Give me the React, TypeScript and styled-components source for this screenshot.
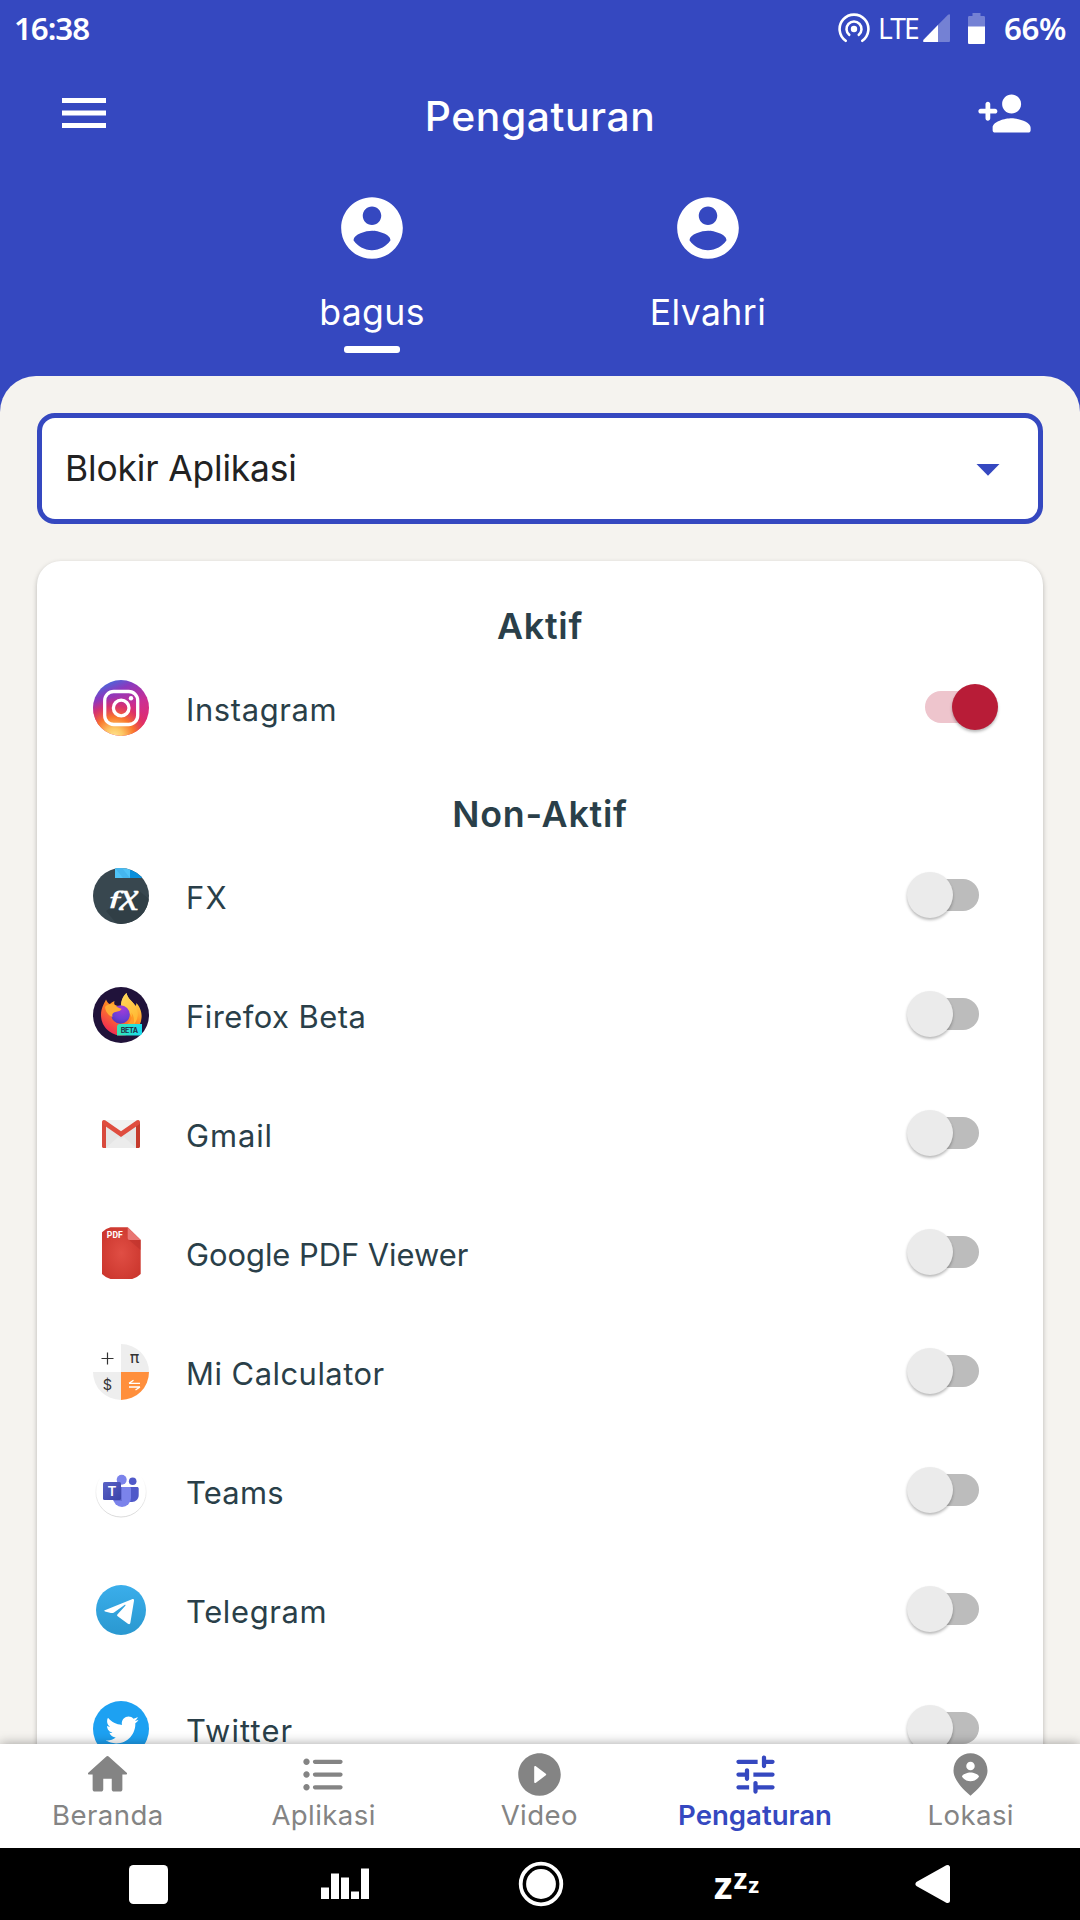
import React from "react";
import styled, { createGlobalStyle } from "styled-components";
import { FaTwitter } from "react-icons/fa";

const BLUE = "#3548c0";
const INK = "#2a3f49";
const GREY = "#848484";

const GlobalStyle = createGlobalStyle`
  * { box-sizing: border-box; }
  body {
    margin: 0;
    font-family: Inter, "Liberation Sans", sans-serif;
    -webkit-font-smoothing: antialiased;
  }
  svg { display: block; flex: none; }
`;

const Screen = styled.div`
  width: 1080px;
  height: 1920px;
  display: flex;
  flex-direction: column;
  overflow: hidden;
  background: ${BLUE};
  color: #fff;
`;

const StatusBar = styled.header`
  height: 56px;
  padding: 0 14px;
  display: flex;
  align-items: center;
  justify-content: space-between;
`;

const StatusText = styled.span<{ $tracking: number }>`
  font: 560 31.3px/40px "Noto Sans", sans-serif;
  letter-spacing: ${(p) => p.$tracking}px;
`;

const StatusGroup = styled.div`
  display: flex;
  align-items: center;
`;

const Network = styled.span`
  width: 45px;
  margin-left: 8px;
  font: 400 28.2px/40px "Noto Sans", sans-serif;
  letter-spacing: -2px;
`;

const BatterySlot = styled.div`
  margin: 0 19px 0 18px;
`;

const Toolbar = styled.div`
  height: 114px;
  padding: 0 47px 0 62px;
  display: grid;
  grid-template-columns: 57px 1fr 57px;
  align-items: center;
`;

const Title = styled.h1`
  margin: 0;
  padding: 5px 15px 0 0;
  text-align: center;
  font-size: 40.8px;
  line-height: 50px;
  font-weight: 550;
  letter-spacing: 0.6px;
`;

const Profiles = styled.div`
  height: 206px;
  width: 672px;
  margin: 0 auto;
  padding-top: 21px;
  display: grid;
  grid-template-columns: 1fr 1fr;
`;

const Profile = styled.div`
  display: flex;
  flex-direction: column;
  align-items: center;
`;

const ProfileName = styled.span`
  margin-top: 26px;
  font-size: 35.6px;
  line-height: 44px;
  letter-spacing: 0.4px;
`;

const ProfileMark = styled.span`
  width: 56px;
  height: 7px;
  margin-top: 11px;
  border-radius: 3px;
  background: #fff;
`;

const Sheet = styled.main`
  flex: 1;
  min-height: 0;
  padding: 37px 37px 0;
  overflow: hidden;
  border-radius: 36px 36px 0 0;
  background: #f5f3ef;
`;

const Select = styled.div`
  height: 111px;
  padding: 0 38px 0 23px;
  display: flex;
  align-items: center;
  justify-content: space-between;
  border: 5px solid ${BLUE};
  border-radius: 18px;
  background: #fff;
  color: #222;
  font-size: 35.4px;
  font-weight: 370;
  letter-spacing: -0.15px;
`;

const Card = styled.section`
  margin-top: 37px;
  height: 1400px;
  padding-top: 18.5px;
  border-radius: 24px;
  background: #fff;
  color: ${INK};
  box-shadow: 0 2px 5px rgba(0, 0, 0, 0.25);
`;

const GroupTitle = styled.h2`
  margin: 0;
  height: 69px;
  padding-top: 24px;
  text-align: center;
  font-size: 35.8px;
  line-height: 45px;
  font-weight: 560;
  letter-spacing: 0.75px;
`;

const AppRow = styled.div`
  height: 119px;
  padding: 0 45px 0 56px;
  display: flex;
  align-items: center;
`;

const AppName = styled.span<{ $tracking: number }>`
  flex: 1;
  padding: 3px 0 0 37px;
  font-size: 30.9px;
  letter-spacing: ${(p) => p.$tracking}px;
`;

const Switch = styled.div`
  position: relative;
  width: 92px;
  height: 47px;
  margin-bottom: 1.5px;
  display: flex;
  align-items: center;
  justify-content: center;
`;

const Track = styled.span<{ $on: boolean }>`
  width: 54px;
  height: 32px;
  border-radius: 16px;
  background: ${(p) => (p.$on ? "#eec5cd" : "#bcbcbc")};
`;

const Thumb = styled.span<{ $on: boolean }>`
  position: absolute;
  top: 0;
  left: ${(p) => (p.$on ? 45.5 : 0.5)}px;
  width: 46.5px;
  height: 46.5px;
  border-radius: 50%;
  background: ${(p) => (p.$on ? "#b81c37" : "#ebebeb")};
  box-shadow: 0 2px 3px rgba(0, 0, 0, 0.28);
`;

const TabBar = styled.nav`
  position: relative;
  z-index: 1;
  height: 104px;
  padding-right: 1.4px;
  display: grid;
  grid-template-columns: repeat(5, 1fr);
  background: #fff;
  box-shadow: 0 0 11px rgba(0, 0, 0, 0.36);
`;

const Tab = styled.a<{ $active: boolean }>`
  padding-top: 5px;
  display: flex;
  flex-direction: column;
  align-items: center;
  color: ${(p) => (p.$active ? BLUE : GREY)};
  fill: currentColor;
  font-size: 27.6px;
  line-height: 30px;
  font-weight: ${(p) => (p.$active ? 570 : 400)};
  letter-spacing: ${(p) => (p.$active ? 0 : 0.4)}px;
`;

const SystemBar = styled.footer`
  position: relative;
  z-index: 2;
  height: 72px;
  padding: 0 49.5px 0 50.5px;
  display: grid;
  grid-template-columns: repeat(5, 196px);
  align-items: center;
  justify-items: center;
  background: #000;
`;

const Sleep = styled.span`
  display: flex;
  align-items: flex-end;
  gap: 1px;
  height: 48px;
  font: 700 37px/48px "Noto Sans", sans-serif;
`;

const Zed = styled.span<{ $size: number; $lift: number }>`
  font-size: ${(p) => p.$size}px;
  line-height: 48px;
  padding-bottom: ${(p) => p.$lift}px;
`;

const Icon = ({ size, d }: { size: number; d: string }) => (
  <svg width={size} height={size} viewBox="0 0 24 24" fill="currentColor">
    <path fillRule="evenodd" d={d} />
  </svg>
);

const accountPath =
  "M12 2C6.48 2 2 6.48 2 12s4.48 10 10 10 10-4.48 10-10S17.52 2 12 2zm0 3c1.66 0 3 1.34 3 3s-1.34 3-3 3-3-1.34-3-3 1.34-3 3-3zm0 14.2c-2.5 0-4.71-1.28-6-3.22.03-1.99 4-3.08 6-3.08 1.99 0 5.97 1.09 6 3.08-1.29 1.94-3.5 3.22-6 3.22z";
const addPersonPath =
  "M15 12c2.21 0 4-1.79 4-4s-1.79-4-4-4-4 1.79-4 4 1.79 4 4 4zm-9-2V8c0-.55-.45-1-1-1s-1 .45-1 1v2H2c-.55 0-1 .45-1 1s.45 1 1 1h2v2c0 .55.45 1 1 1s1-.45 1-1v-2h2c.55 0 1-.45 1-1s-.45-1-1-1H6zm9 4c-2.67 0-8 1.34-8 4v1c0 .55.45 1 1 1h14c.55 0 1-.45 1-1v-1c0-2.66-5.33-4-8-4z";

const tabs = [
  {
    label: "Beranda",
    d: "M10 19v-5h4v5c0 .55.45 1 1 1h3c.55 0 1-.45 1-1v-7h1.7c.46 0 .68-.57.33-.87L12.67 3.6c-.38-.34-.96-.34-1.34 0l-8.36 7.53c-.34.3-.13.87.33.87H5v7c0 .55.45 1 1 1h3c.55 0 1-.45 1-1z",
  },
  {
    label: "Aplikasi",
    d: "M4 10.5c-.83 0-1.5.67-1.5 1.5s.67 1.5 1.5 1.5 1.5-.67 1.5-1.5-.67-1.5-1.5-1.5zm0-6c-.83 0-1.5.67-1.5 1.5S3.17 7.5 4 7.5 5.5 6.83 5.5 6 4.83 4.5 4 4.5zm0 12c-.83 0-1.5.68-1.5 1.5s.68 1.5 1.5 1.5 1.5-.68 1.5-1.5-.67-1.5-1.5-1.5zM8 19h12c.55 0 1-.45 1-1s-.45-1-1-1H8c-.55 0-1 .45-1 1s.45 1 1 1zm0-6h12c.55 0 1-.45 1-1s-.45-1-1-1H8c-.55 0-1 .45-1 1s.45 1 1 1zM7 6c0 .55.45 1 1 1h12c.55 0 1-.45 1-1s-.45-1-1-1H8c-.55 0-1 .45-1 1z",
  },
  {
    label: "Video",
    d: "M12 2C6.48 2 2 6.48 2 12s4.48 10 10 10 10-4.48 10-10S17.52 2 12 2zM9.5 15.5v-7c0-.41.47-.65.8-.4l4.67 3.5c.27.2.27.6 0 .8l-4.67 3.5c-.33.25-.8.01-.8-.4z",
  },
  {
    label: "Pengaturan",
    active: true,
    d: "M3 18c0 .55.45 1 1 1h5v-2H4c-.55 0-1 .45-1 1zM3 6c0 .55.45 1 1 1h9V5H4c-.55 0-1 .45-1 1zm10 14v-1h7c.55 0 1-.45 1-1s-.45-1-1-1h-7v-1c0-.55-.45-1-1-1s-1 .45-1 1v4c0 .55.45 1 1 1s1-.45 1-1zM7 10v1H4c-.55 0-1 .45-1 1s.45 1 1 1h3v1c0 .55.45 1 1 1s1-.45 1-1v-4c0-.55-.45-1-1-1s-1 .45-1 1zm14 2c0-.55-.45-1-1-1h-9v2h9c.55 0 1-.45 1-1zm-5-3c.55 0 1-.45 1-1V7h3c.55 0 1-.45 1-1s-.45-1-1-1h-3V4c0-.55-.45-1-1-1s-1 .45-1 1v4c0 .55.45 1 1 1z",
  },
  {
    label: "Lokasi",
    d: "M12 2c-4.2 0-8 3.22-8 8.2 0 3.32 2.67 7.25 8 11.8 5.33-4.55 8-8.48 8-11.8C20 5.22 16.2 2 12 2zM12 6a2 2 0 1 1 0 4 2 2 0 0 1 0-4zM12 15.2c-1.67 0-3.14-.85-4-2.15.02-1.32 2.67-2.05 4-2.05s3.98.73 4 2.05c-.86 1.3-2.33 2.15-4 2.15z",
  },
];

const AppSvg = ({ children }: { children: React.ReactNode }) => (
  <svg width="56" height="56" viewBox="0 0 56 56">
    {children}
  </svg>
);

const InstagramIcon = () => (
  <AppSvg>
    <defs>
      <linearGradient id="igBase" x1="0.25" y1="0" x2="0.7" y2="1">
        <stop offset="0" stopColor="#3f6fe0" />
        <stop offset="0.22" stopColor="#8a39be" />
        <stop offset="0.55" stopColor="#cc2e93" />
        <stop offset="1" stopColor="#ea2c62" />
      </linearGradient>
      <radialGradient id="igGlow" cx="0.38" cy="1.02" r="0.72">
        <stop offset="0" stopColor="#ffe595" />
        <stop offset="0.22" stopColor="#fdc865" />
        <stop offset="0.5" stopColor="#f9772c" />
        <stop offset="0.78" stopColor="#e0325f" stopOpacity="0.75" />
        <stop offset="1" stopColor="#d02b80" stopOpacity="0" />
      </radialGradient>
    </defs>
    <circle cx="28" cy="28" r="28" fill="url(#igBase)" />
    <circle cx="28" cy="28" r="28" fill="url(#igGlow)" />
    <g fill="none" stroke="#fff" strokeWidth="3.3">
      <rect x="11.7" y="11.5" width="33" height="33" rx="9" />
      <circle cx="28.2" cy="28" r="7.8" />
    </g>
    <circle cx="38" cy="18.3" r="2.2" fill="#fff" />
  </AppSvg>
);

const FxIcon = () => (
  <AppSvg>
    <clipPath id="fxClip">
      <circle cx="28" cy="28" r="28" />
    </clipPath>
    <g clipPath="url(#fxClip)">
      <rect width="56" height="56" fill="#38474f" />
      <path d="M13 43l32-21 11 9v25H24z" fill="#313f46" />
      <rect x="22" width="15" height="10" fill="#4fc3f7" />
      <path d="M22 0h7l8 10H30z" fill="#45b6ee" />
      <rect x="37" width="15" height="10" fill="#0a8fdc" />
    </g>
    <g fill="#fff" stroke="#fff" fontFamily="'Liberation Serif', serif" fontStyle="italic">
      <text transform="translate(14.5 37) scale(1.5 1)" fontSize="22" strokeWidth="0.9">ƒ</text>
      <text x="26.500" y="41.500" fontSize="43" strokeWidth="0.5">x</text>
    </g>
  </AppSvg>
);

const FirefoxIcon = () => (
  <AppSvg>
    <defs>
      <linearGradient id="ffBody" x1="0.8" y1="0.1" x2="0.25" y2="0.95">
        <stop offset="0" stopColor="#ffd84a" />
        <stop offset="0.45" stopColor="#ff8a22" />
        <stop offset="1" stopColor="#f02a52" />
      </linearGradient>
      <linearGradient id="ffTail" x1="0.3" y1="0" x2="0.7" y2="1">
        <stop offset="0" stopColor="#ffd65a" />
        <stop offset="1" stopColor="#ffb52e" />
      </linearGradient>
      <radialGradient id="ffGlobe" cx="0.6" cy="0.2" r="0.9">
        <stop offset="0" stopColor="#a33bd8" />
        <stop offset="0.6" stopColor="#6b3fd6" />
        <stop offset="1" stopColor="#4a35b0" />
      </radialGradient>
      <linearGradient id="ffBadge">
        <stop offset="0" stopColor="#35e6b5" />
        <stop offset="1" stopColor="#19dcee" />
      </linearGradient>
    </defs>
    <circle cx="28" cy="28" r="28" fill="#20123a" />
    <path d="M8 28C8 21 11 17 13 12.500c1 2 2 3.500 3.500 4.500 1.300-.6 3-2.300 5-3-.5 2-.3 3 .3 4L28 20c0-7 3-11.500 5.500-14 1 6 6 8 9 13 1-1 .8-2 .8-3C48 21 49 27 48.500 31 48 41 39 48.500 28.500 48.500S8 40 8 28z" fill="url(#ffBody)" />
    <path d="M28 19c0-7 3-10.500 5.500-13 1 6 7 8.500 10 15s.5 14-4 18c1-6-1-12-5-15-2-1.500-4.500-2-6.500-5z" fill="url(#ffTail)" />
    <circle cx="27.5" cy="27.5" r="9.3" fill="url(#ffGlobe)" />
    <path d="M12 20c3-3.500 7-3.500 10-2 2 2.500 4 3 6.500 3.800-.5 2.200-3.500 2.800-6 3.200-3 .8-3.500 2-3 5-5-2-7-6-7.500-10z" fill="#ffac35" />
    <path d="M28 38.500c8 0 12-6 10.500-13 4 6 3 13-1 17l-9.500 2z" fill="#ff9a27" />
    <path d="M27 37h22v8.500c0 2-1 3-3 3H24v-8.500c0-2 1-3 3-3z" fill="url(#ffBadge)" />
    <text x="27.7" y="45.5" fontFamily="Inter, sans-serif" fontSize="7.2" fontWeight="700" textLength="17.5" fill="#20324c">BETA</text>
  </AppSvg>
);

const GmailIcon = () => (
  <AppSvg>
    <path d="M10 14h36v28H10z" fill="#e5e5e5" />
    <path d="M12 14h32L28 27z" fill="#f1f1f1" />
    <path d="M13 42l12-11 3 2 3-2 12 11z" fill="#ececec" />
    <path d="M9 16v24.500c0 .8.7 1.500 1.500 1.500H13V17z" fill="#d84a3d" />
    <path d="M47 16v24.500c0 .8-.7 1.500-1.500 1.500H43V17z" fill="#c53a2c" />
    <path d="M9 16.300c0-2.300 2-3 3.500-1.800L28 25.200l15.500-10.700C45 13.300 47 14 47 16.300c0 1.300-.5 1.900-1.300 2.500L28 31 10.300 18.800C9.500 18.200 9 17.600 9 16.300z" fill="#df4d3f" />
  </AppSvg>
);

const PdfIcon = () => (
  <AppSvg>
    <defs>
      <radialGradient id="pdfRed" cx="0.5" cy="0.5" r="0.6">
        <stop offset="0" stopColor="#e04e44" />
        <stop offset="1" stopColor="#cc372e" />
      </radialGradient>
    </defs>
    <path d="M17.500 2.300H34.700L47.700 15v34q-4 4-8.500 5H17.500Q13 53 9 49V7.300Q13 3.300 17.500 2.300z" fill="url(#pdfRed)" />
    <path d="M36 15h11.700v10z" fill="#b9302a" opacity="0.5" />
    <path d="M34.700 2.300V13c0 1.300.7 2 2 2h11z" fill="#e97572" />
    <text x="13.8" y="12.7" fontFamily="Roboto, sans-serif" fontSize="8.6" fontWeight="700" textLength="16" fill="#fff">PDF</text>
  </AppSvg>
);

const CalculatorIcon = () => (
  <AppSvg>
    <path d="M28 0a28 28 0 0 1 28 28H28zM0 28h28v28A28 28 0 0 1 0 28z" fill="#eeeeee" />
    <path d="M28 28h28a28 28 0 0 1-28 28z" fill="#ff8f3c" />
    <path d="M8.500 14.500h12M14.500 8.500v12" stroke="#333" strokeWidth="1.2" />
    <g fill="#333" textAnchor="middle">
      <text x="41.5" y="19" fontFamily="'DejaVu Sans', sans-serif" fontSize="16">π</text>
      <text x="14.5" y="46" fontFamily="Inter, sans-serif" fontSize="14.5">$</text>
    </g>
    <path d="M36 39.300h11M36 39.300l4.500-3M36 43h11M47 43l-4.500 3" fill="none" stroke="#fff" strokeWidth="1.3" />
  </AppSvg>
);

const TeamsIcon = () => (
  <AppSvg>
    <defs>
      <linearGradient id="teamsRim" x1="0" y1="0" x2="0" y2="1">
        <stop offset="0.2" stopColor="#fff" />
        <stop offset="1" stopColor="#dadada" />
      </linearGradient>
      <linearGradient id="teamsTile" x1="0" y1="0" x2="1" y2="1">
        <stop offset="0" stopColor="#5a62c6" />
        <stop offset="1" stopColor="#3a42a8" />
      </linearGradient>
    </defs>
    <circle cx="28" cy="28.8" r="25.2" fill="#fff" stroke="url(#teamsRim)" />
    <circle cx="28.7" cy="16.8" r="5" fill="#7b83eb" />
    <circle cx="39.7" cy="18.3" r="3.8" fill="#5059c9" />
    <path d="M36 24h8c1 0 1.700.7 1.700 1.700V32c0 4-3 7-6.700 7h-3z" fill="#5059c9" />
    <path d="M20 24h16.500c1 0 1.500.6 1.500 1.500V35a9 9 0 0 1-18 0z" fill="#7b83eb" />
    <path d="M20 24h9v14h-8.500z" fill="#5a62c8" opacity="0.6" />
    <rect x="10" y="19" width="18" height="18" rx="1.5" fill="url(#teamsTile)" />
    <text x="19" y="33" textAnchor="middle" fontFamily="Inter, sans-serif" fontSize="13.5" fontWeight="600" fill="#fff">T</text>
  </AppSvg>
);

const TelegramIcon = () => (
  <AppSvg>
    <defs>
      <linearGradient id="tgBlue" x1="0" y1="0" x2="0" y2="1">
        <stop offset="0" stopColor="#3aaeeb" />
        <stop offset="1" stopColor="#2a98d0" />
      </linearGradient>
    </defs>
    <circle cx="28" cy="28" r="25" fill="url(#tgBlue)" />
    <path d="M11.800 28.300L39 17.200c1.400-.5 2.200.2 2 1.600l-3.600 21.800c-.3 1.600-1.300 1.900-2.500 1.100l-10.200-7.500c-.8-.6-.8-1.200-.1-2l7.700-8.500c.6-.8 0-1.200-.8-.6L21 30.500c-1 .7-2 .7-3.100.4l-5.900-1.500c-1-.3-1-.8-.2-1.100z" fill="#fff" />
  </AppSvg>
);

const TwitterIcon = () => (
  <AppSvg>
    <circle cx="28" cy="28" r="28" fill="#1da1f2" />
    <FaTwitter x="12.7" y="12.5" size={33} color="#fff" />
  </AppSvg>
);

type AppItem = { name: string; tracking: number; icon: () => React.JSX.Element; on?: boolean };

const activeApps: AppItem[] = [{ name: "Instagram", tracking: 0.65, icon: InstagramIcon, on: true }];

const inactiveApps: AppItem[] = [
  { name: "FX", tracking: 1.2, icon: FxIcon },
  { name: "Firefox Beta", tracking: 0.47, icon: FirefoxIcon },
  { name: "Gmail", tracking: 0.9, icon: GmailIcon },
  { name: "Google PDF Viewer", tracking: -0.03, icon: PdfIcon },
  { name: "Mi Calculator", tracking: 0.5, icon: CalculatorIcon },
  { name: "Teams", tracking: 0.25, icon: TeamsIcon },
  { name: "Telegram", tracking: 0.65, icon: TelegramIcon },
  { name: "Twitter", tracking: 1.1, icon: TwitterIcon },
];

const AppEntry = ({ app }: { app: AppItem }) => (
  <AppRow>
    <app.icon />
    <AppName $tracking={app.tracking}>{app.name}</AppName>
    <Switch role="switch" aria-checked={!!app.on}>
      <Track $on={!!app.on} />
      <Thumb $on={!!app.on} />
    </Switch>
  </AppRow>
);

export default function App() {
  return (
    <>
      <GlobalStyle />
      <Screen>
        <StatusBar>
          <StatusText $tracking={-1.05}>16:38</StatusText>
          <StatusGroup>
            <svg width="32" height="32" viewBox="-16 -17 32 32" fill="none" stroke="#fff" strokeWidth="2.6" strokeLinecap="round">
              <circle r="3.2" fill="#fff" stroke="none" />
              <path d="M-4.800 5.800A7.500 7.500 0 1 1 4.800 5.800" />
              <path d="M-8.300 11.800A14.400 14.400 0 1 1 8.300 11.800" />
            </svg>
            <Network>LTE</Network>
            <svg width="27" height="28" viewBox="0 0 27 28">
              <path d="M0 28V26L25 .8C26 0 27 0 27 1v25.500c0 1-.5 1.500-1.500 1.500z" fill="#7481d4" />
              <path d="M15 11v17H1c-1 0-1-1.500-.3-2.300z" fill="#fff" />
            </svg>
            <BatterySlot>
              <svg width="17" height="31" viewBox="0 0 17 31">
                <path d="M4.500 0h8v3H15.500c1 0 1.500.5 1.500 1.500V14H0V4.500C0 3.500.5 3 1.500 3h3z" fill="#7481d4" />
                <path d="M0 13.500h17v16c0 1-.5 1.500-1.500 1.500h-14C.5 31 0 30.500 0 29.500z" fill="#fff" />
              </svg>
            </BatterySlot>
            <StatusText $tracking={-0.4}>66%</StatusText>
          </StatusGroup>
        </StatusBar>

        <Toolbar>
          <svg width="44" height="30" viewBox="0 0 44 30" fill="#fff">
            <rect width="44" height="5" />
            <rect y="12.5" width="44" height="5" />
            <rect y="25" width="44" height="5" />
          </svg>
          <Title>Pengaturan</Title>
          <Icon size={57} d={addPersonPath} />
        </Toolbar>

        <Profiles>
          <Profile>
            <Icon size={74} d={accountPath} />
            <ProfileName>bagus</ProfileName>
            <ProfileMark />
          </Profile>
          <Profile>
            <Icon size={74} d={accountPath} />
            <ProfileName>Elvahri</ProfileName>
          </Profile>
        </Profiles>

        <Sheet>
          <Select>
            Blokir Aplikasi
            <svg width="24" height="15" viewBox="0 0 24 15">
              <path d="M.5 3h23L12 14.800z" fill={BLUE} />
            </svg>
          </Select>
          <Card>
            <GroupTitle>Aktif</GroupTitle>
            {activeApps.map((app) => (
              <AppEntry key={app.name} app={app} />
            ))}
            <GroupTitle>Non-Aktif</GroupTitle>
            {inactiveApps.map((app) => (
              <AppEntry key={app.name} app={app} />
            ))}
          </Card>
        </Sheet>

        <TabBar>
          {tabs.map((tab) => (
            <Tab key={tab.label} $active={!!tab.active}>
              <Icon size={51} d={tab.d} />
              {tab.label}
            </Tab>
          ))}
        </TabBar>

        <SystemBar>
          <svg width="39" height="39" viewBox="0 0 39 39">
            <rect width="39" height="39" rx="4.5" fill="#fff" />
          </svg>
          <svg width="48" height="32" viewBox="0 0 48 32" fill="#fff">
            <rect x="0" y="19.5" width="8" height="11.5" />
            <rect x="10" y="5.5" width="8" height="25.5" />
            <rect x="20" y="9.5" width="8" height="21.5" />
            <rect x="30" y="23.5" width="8" height="7.5" />
            <rect x="40" y="0.5" width="8" height="30.5" />
          </svg>
          <svg width="46" height="46" viewBox="0 0 46 46">
            <circle cx="23" cy="23" r="20.3" fill="none" stroke="#fff" strokeWidth="3.8" />
            <circle cx="23" cy="23" r="14.9" fill="#fff" />
          </svg>
          <Sleep>
            <Zed $size={38} $lift={0}>z</Zed>
            <Zed $size={28} $lift={6}>z</Zed>
            <Zed $size={22} $lift={0}>z</Zed>
          </Sleep>
          <svg width="36" height="40" viewBox="0 0 36 40">
            <path d="M3 20L32.500 3.500v33z" fill="#fff" stroke="#fff" strokeWidth="5" strokeLinejoin="round" />
          </svg>
        </SystemBar>
      </Screen>
    </>
  );
}
